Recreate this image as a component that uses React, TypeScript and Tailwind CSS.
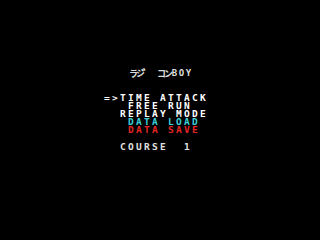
const menu = [
  { text: "=>TIME ATTACK", color: "text-white" },
  { text: "   FREE RUN", color: "text-white" },
  { text: "  REPLAY MODE", color: "text-white" },
  { text: "   DATA LOAD", color: "text-[#3cd0d8]" },
  { text: "   DATA SAVE", color: "text-[#e42424]" },
]

const kana = "inline-block w-[7px] h-[9px] text-center text-[#dcdcdc] text-[9px] leading-[9px] font-bold font-['Noto_Sans_CJK_JP',sans-serif]"
const latin = "inline-block w-[7px] h-[9px] text-center text-[#dcdcdc] text-[9px] leading-[9px] font-bold font-['DejaVu_Sans_Mono',monospace]"

export default function App() {
  return (
    <div className="w-[320px] h-[240px] bg-black overflow-hidden">
      {/* title */}
      <div className="pt-[69px] pl-[129px] flex h-[78px]">
        <span className={kana}>ラ</span>
        <span className={kana}>ジ</span>
        <span className="inline-block w-[7px] h-[9px] overflow-visible whitespace-nowrap text-[#dcdcdc] text-[14px] leading-[9px] font-bold font-['Noto_Sans_CJK_JP',sans-serif]">
          <span className="relative top-[1px] left-[-2px]">゛</span>
        </span>
        <span className="inline-block w-[7px]"> </span>
        <span className={kana}>コ</span>
        <span className={kana}>ン</span>
        <span className={latin}>B</span>
        <span className={latin}>O</span>
        <span className={latin}>Y</span>
      </div>

      {/* menu */}
      <div className="mt-[16px] pl-[104px] font-['DejaVu_Sans_Mono',monospace] font-bold text-[9.5px] leading-[8px] tracking-[2.28px]">
        {menu.map((m) => (
          <div key={m.text} className={`whitespace-pre h-[8px] ${m.color}`}>
            {m.text}
          </div>
        ))}
        <div className="whitespace-pre h-[8px] mt-[9px] text-[#e0e0e0]">{"  COURSE  1"}</div>
      </div>
    </div>
  )
}
